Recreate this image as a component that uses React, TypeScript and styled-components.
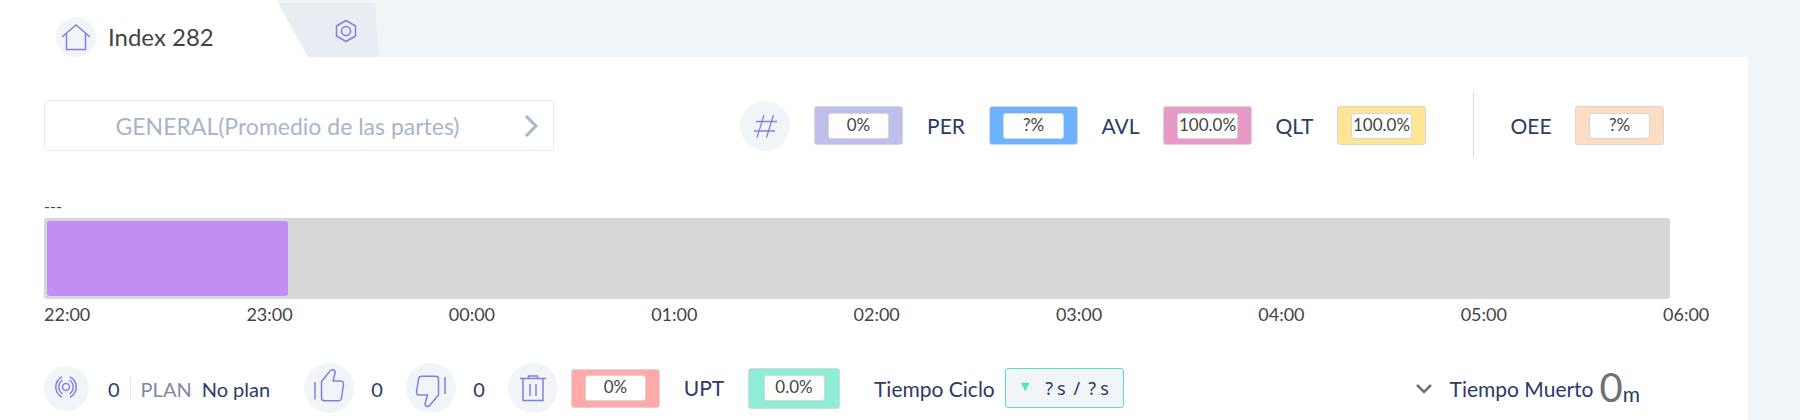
import React from "react";
import styled, { createGlobalStyle } from "styled-components";

const GlobalStyle = createGlobalStyle`
  * { box-sizing: border-box; }
  body {
    margin: 0;
    background: #f1f5f8;
    color: #444;
    font-family: Lato, "Liberation Sans", sans-serif;
  }
  button { font: inherit; color: inherit; background: none; border: 0; padding: 0; cursor: pointer; }
`;

const Page = styled.div`
  min-height: 100vh;
  display: flex;
  flex-direction: column;
`;

const Tabs = styled.header`
  display: flex;
  align-items: flex-end;
  height: 57px;
`;

const ActiveTab = styled.a`
  display: flex;
  align-items: center;
  gap: 12px;
  width: 308px;
  height: 57px;
  padding: 16px 0 0 56px;
  background: #fff;
  clip-path: polygon(0 0, 277px 0, 100% 100%, 0 100%);
  color: #444;
  font-size: 24px;
  line-height: 40px;
  text-decoration: none;
`;

const SettingsTab = styled.button`
  display: flex;
  justify-content: center;
  width: 101px;
  height: 54px;
  margin-left: -30px;
  padding: 16px 0 0 34px;
  background: #eaedf3;
  clip-path: polygon(0 0, 97px 0, 100% 100%, 30px 100%);
`;

const Panel = styled.main`
  flex: 1;
  margin-right: 52px;
  padding: 36px 78px 0 44px;
  background: #fff;
  border-top-right-radius: 3px;
`;

const TopRow = styled.div`
  display: flex;
  align-items: center;
  justify-content: space-between;
  height: 65px;
  padding-right: 6px;
`;

const PartPicker = styled.button`
  display: flex;
  align-items: center;
  flex: 0 0 510px;
  height: 51px;
  padding: 0 15px 0 6px;
  border: 1px solid #eaedf3;
  border-radius: 3px;
  background: #fff;
  color: #a9b5c9;
  font-size: 23px;
  span { flex: 1; text-align: center; }
`;

const Metrics = styled.div`
  display: flex;
  align-items: center;
`;

const Circle = styled.span<{ $size: number }>`
  display: flex;
  flex: none;
  align-items: center;
  justify-content: center;
  width: ${(p) => p.$size}px;
  height: ${(p) => p.$size}px;
  border-radius: 50%;
  background: #f1f5f8;
`;

const CircleButton = styled(Circle).attrs({ as: "button" })``;

const ChipFrame = styled.span<{ $color: string; $large?: boolean }>`
  display: flex;
  flex: none;
  align-items: center;
  justify-content: center;
  width: ${(p) => (p.$large ? 92 : 89)}px;
  height: ${(p) => (p.$large ? 41 : 39)}px;
  border: 1px solid #d7d7d7;
  border-radius: 3px;
  background: ${(p) => p.$color};
`;

const ChipValue = styled.output`
  width: 61px;
  height: 26px;
  border: 1px solid #d7d7d7;
  border-radius: 3px;
  background: #fff;
  color: #444;
  font-size: 17px;
  line-height: 22px;
  text-align: center;
`;

const MetricLabel = styled.span<{ $width?: number }>`
  width: ${(p) => p.$width ?? 85}px;
  color: #2e3a66;
  font-size: 21px;
  line-height: 28px;
  text-align: center;
`;

const Divider = styled.span<{ $height: number; $color?: string }>`
  width: 1px;
  height: ${(p) => p.$height}px;
  background: ${(p) => p.$color ?? "#d7d9dd"};
`;

const Timeline = styled.section`
  margin-top: 38px;
`;

const TimelineName = styled.div`
  padding-bottom: 2px;
  font-size: 16px;
  line-height: 20px;
`;

const Track = styled.div`
  height: 81px;
  padding: 3px;
  border-radius: 3px;
  background: #d7d7d7;
`;

const Segment = styled.div`
  height: 75px;
  border-radius: 3px;
  background: #c28ef2;
`;

const Hours = styled.div`
  display: grid;
  grid-template-columns: repeat(8, 1fr) 0;
  margin-right: 7px;
  padding-top: 3px;
  font-size: 18px;
  line-height: 24px;
`;

const BottomRow = styled.div`
  display: flex;
  align-items: center;
  height: 50px;
  margin-top: 37px;
  padding-right: 30px;
  color: #2e3a66;
  font-size: 20px;
  line-height: 28px;
  white-space: nowrap;
`;

const Plan = styled.div`
  display: flex;
  align-items: center;
  gap: 10px;
  width: 215px;
  padding: 1px 0 0 19px;
`;

const PlanLabel = styled.span`
  color: #8089a5;
`;

const Count = styled.span`
  width: 52px;
  padding: 1px 6px 0 0;
  text-align: center;
`;

const Spacer = styled.span<{ $width: number }>`
  width: ${(p) => p.$width}px;
`;

const CycleLabel = styled.span`
  margin: 0 10px 0 34px;
  padding-top: 1px;
  font-size: 21px;
`;

const Cycle = styled.output`
  display: flex;
  align-items: center;
  gap: 4px;
  width: 119px;
  height: 40px;
  padding: 0 14px 0 15px;
  border: 1px solid #50e3c2;
  border-radius: 3px;
  background: #f1f5f8;
  font-family: "Noto Sans", sans-serif;
  font-size: 18px;
  svg { margin: 0 12px 3px 0; }
`;

const CycleSlash = styled.span`
  padding: 0 4px;
`;

const Downtime = styled.div`
  display: flex;
  align-items: center;
  margin-left: auto;
  font-size: 21px;
`;

const DowntimeToggle = styled.button`
  display: flex;
  align-items: center;
  gap: 18px;
  padding-top: 1px;
`;

const DowntimeValue = styled.span`
  margin-left: 6px;
  padding-top: 5px;
  line-height: 40px;
  strong { color: #6d717b; font-size: 40px; font-weight: 400; }
`;

const line = { fill: "none", stroke: "#7f80e0", strokeWidth: 1.5 };

interface ChipProps {
  color: string;
  value: string;
  label: string;
  large?: boolean;
}

function Chip({ color, value, label, large }: ChipProps) {
  return (
    <ChipFrame $color={color} $large={large}>
      <ChipValue aria-label={label}>{value}</ChipValue>
    </ChipFrame>
  );
}

const HomeIcon = () => (
  <svg width="30" height="28" viewBox="0 0 30 28" {...line}>
    <path d="M1 14 15 2l14 12M5.500 11v15.500h19V11" />
  </svg>
);

const NutIcon = () => (
  <svg width="22" height="24" viewBox="0 0 22 24" {...line} strokeLinejoin="round">
    <path d="M11 1.500 20.500 7v10L11 22.500 1.500 17V7Z" />
    <circle cx="11" cy="12" r="4.500" />
  </svg>
);

const HashIcon = () => (
  <svg width="24" height="26" viewBox="0 0 24 26" {...line} strokeWidth="1.3">
    <path d="M11 2 4 24.500M20.500 2l-7 22.500M3 8.500h21M1 18h21" />
  </svg>
);

const SignalIcon = () => (
  <svg width="26" height="24" viewBox="0 0 26 24" {...line}>
    <circle cx="12" cy="11" r="3.500" />
    <path d="M8.500 4a8.500 8.500 0 0 0 0 14M15.500 4a8.500 8.500 0 0 1 0 14M8 .8a11.500 11.500 0 0 0 0 20.400M16 .8a11.500 11.500 0 0 1 0 20.400" />
  </svg>
);

const ThumbUpIcon = () => (
  <svg width="50" height="50" viewBox="0 0 50 50" {...line} strokeLinejoin="round">
    <path d="M11 19v17.500M17.500 18.500 26 8c2-2.600 5.800-.8 5 2.200L29 18h7.500c2 0 3.200 1.200 3 3l-2 14c-.3 1.800-1.400 2.800-3 2.800H20.500c-2 0-3-1.200-3-3Z" />
  </svg>
);

const ThumbDownIcon = () => (
  <svg width="50" height="50" viewBox="0 0 50 50" {...line} strokeLinejoin="round">
    <path d="M39 14v17M32.500 32 24 42c-1.800 2.800-5.600 1-4.900-1.700L21.500 32H13c-1.800 0-2.700-1-2.500-2.800L12.600 16c.3-1.900 1.300-2.700 3-2.700H29.500c2 0 3 1 3 2.700Z" />
  </svg>
);

const TrashIcon = () => (
  <svg width="26" height="28" viewBox="0 0 26 28" {...line}>
    <path d="M0 4.500h26M8.500 4V2h9v2M3 5v21.500h20V5M10 10v12M16 10v12" />
  </svg>
);

const hours = ["22:00", "23:00", "00:00", "01:00", "02:00", "03:00", "04:00", "05:00", "06:00"];
const elapsed = 14.88;

export default function App() {
  return (
    <Page>
      <GlobalStyle />
      <Tabs>
        <ActiveTab href="#index">
          <Circle $size={40}><HomeIcon /></Circle>
          Index 282
        </ActiveTab>
        <SettingsTab aria-label="Ajustes"><NutIcon /></SettingsTab>
      </Tabs>
      <Panel>
        <TopRow>
          <PartPicker>
            <span>GENERAL(Promedio de las partes)</span>
            <svg width="14" height="22" viewBox="0 0 14 22" fill="none" stroke="#a9b5c9" strokeWidth="3">
              <path d="m2 1 10 10L2 21" />
            </svg>
          </PartPicker>
          <Metrics>
            <CircleButton $size={50} aria-label="Cantidad"><HashIcon /></CircleButton>
            <Spacer $width={24} />
            <Chip color="#bfbfec" value="0%" label="#" />
            <MetricLabel $width={86}>PER</MetricLabel>
            <Chip color="#6db3ff" value="?%" label="PER" />
            <MetricLabel>AVL</MetricLabel>
            <Chip color="#e999c8" value="100.0%" label="AVL" />
            <MetricLabel>QLT</MetricLabel>
            <Chip color="#fee695" value="100.0%" label="QLT" />
            <Spacer $width={47} />
            <Divider $height={65} />
            <Spacer $width={13} />
            <MetricLabel $width={88}>OEE</MetricLabel>
            <Chip color="#fddec2" value="?%" label="OEE" />
          </Metrics>
        </TopRow>
        <Timeline>
          <TimelineName>---</TimelineName>
          <Track><Segment style={{ width: `${elapsed}%` }} /></Track>
          <Hours>{hours.map((h) => <span key={h}>{h}</span>)}</Hours>
        </Timeline>
        <BottomRow>
          <Circle $size={45}><SignalIcon /></Circle>
          <Plan>
            <span>0</span>
            <Divider $height={23} $color="#e4e7ee" />
            <PlanLabel>PLAN</PlanLabel>
            <span>No plan</span>
          </Plan>
          <CircleButton $size={50} aria-label="Buenas"><ThumbUpIcon /></CircleButton>
          <Count>0</Count>
          <CircleButton $size={50} aria-label="Malas"><ThumbDownIcon /></CircleButton>
          <Count>0</Count>
          <CircleButton $size={50} aria-label="Descartar"><TrashIcon /></CircleButton>
          <Spacer $width={13} />
          <Chip color="#ffa9a9" value="0%" label="Descarte" />
          <MetricLabel $width={88}>UPT</MetricLabel>
          <Chip color="#8dedd7" value="0.0%" label="UPT" large />
          <CycleLabel>Tiempo Ciclo</CycleLabel>
          <Cycle>
            <svg width="10" height="10" viewBox="0 0 10 10"><path d="M0 0h10L5 10Z" fill="#50e3c2" /></svg>
            <span>?</span><span>s</span><CycleSlash>/</CycleSlash><span>?</span><span>s</span>
          </Cycle>
          <Downtime>
            <DowntimeToggle>
              <svg width="16" height="10" viewBox="0 0 16 10" fill="none" stroke="#6d717b" strokeWidth="2.500">
                <path d="m1 1 7 7 7-7" />
              </svg>
              Tiempo Muerto
            </DowntimeToggle>
            <DowntimeValue><strong>0</strong>m</DowntimeValue>
          </Downtime>
        </BottomRow>
      </Panel>
    </Page>
  );
}
